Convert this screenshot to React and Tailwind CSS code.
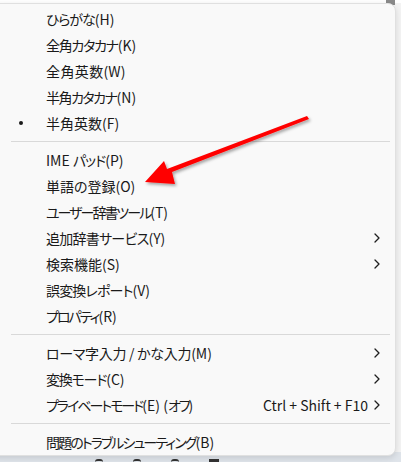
import React from "react";

const Chevron = () => (
  <svg width="8" height="10" viewBox="0 0 8 10" className="shrink-0">
    <path d="M2 1 L6 5 L2 9" fill="none" stroke="#1f1f1f" strokeWidth="1.3" strokeLinecap="round" strokeLinejoin="round" />
  </svg>
);

const Row = ({ children, bullet, sub, shortcut }) => (
  <div className="h-[26px] flex items-center relative">
    {bullet && <span className="absolute left-[18px] top-[11px] w-[4px] h-[4px] rounded-full bg-[#1a1a1a]" />}
    <span className="pl-[45px] flex-1 whitespace-nowrap">{children}</span>
    {shortcut && <span className="mr-[5px] whitespace-nowrap">{shortcut}</span>}
    <span className="w-[22px] flex items-center">{sub && <Chevron />}</span>
  </div>
);

const Sep = () => (
  <div className="py-[5px] pl-[10px] pr-[5px]">
    <div className="h-px bg-[#d9d9d9]" />
  </div>
);

export default function App() {
  return (
    <div className="w-[401px] h-[462px] bg-[#f3f3f3] relative overflow-hidden text-[14px] text-[#1a1a1a] font-['Noto_Sans_CJK_JP','Noto_Sans',sans-serif] [font-feature-settings:'palt']">
      <div className="h-[3px] bg-white flex justify-end">
        <div className="w-[9px] h-[5px] bg-[#8a8a8a] mr-[6px]" />
      </div>
      <div className="flex flex-col">
        <div className="-ml-[10px] w-[406px] h-[453px] bg-[#f9f9f9] rounded-[8px] border border-[#e0e0e0] shadow-[0_2px_6px_rgba(0,0,0,0.12)] pt-[2px] pl-[10px] relative z-10">
          <Row><span className="tracking-[-1px]">ひらがな</span>(H)</Row>
          <Row><span className="tracking-[-1.3px]">全角カタカナ</span>(K)</Row>
          <Row><span className="tracking-[0.4px]">全角英数</span>(W)</Row>
          <Row><span className="tracking-[-1.5px]">半角カタカナ</span>(N)</Row>
          <Row bullet>半角英数(F)</Row>
          <Sep />
          <Row>IME <span className="tracking-[-1px]">パッド</span>(P)</Row>
          <Row>単語の登録(O)</Row>
          <Row><span className="tracking-[-2px]">ユーザー辞書ツール</span>(T)</Row>
          <Row sub><span className="tracking-[-0.75px]">追加辞書サービス</span>(Y)</Row>
          <Row sub>検索機能(S)</Row>
          <Row><span className="tracking-[-0.85px]">誤変換レポート</span>(V)</Row>
          <Row><span className="tracking-[-2px]">プロパティ</span>(R)</Row>
          <Sep />
          <Row sub><span className="tracking-[-0.3px]">ローマ字入力 / かな入力</span>(M)</Row>
          <Row sub><span className="tracking-[-1.2px]">変換モード</span>(C)</Row>
          <Row sub shortcut="Ctrl + Shift + F10">
            <span className="tracking-[-2px]">プライベートモード</span>(E) (<span className="tracking-[-2px]">オフ</span>)
          </Row>
          <Sep />
          <Row><span className="tracking-[-1.9px]">問題のトラブルシューティング</span>(B)</Row>
        </div>
        <div className="h-[10px] -mt-[4px] bg-[#dfe4ea] flex items-end gap-[30px] pl-[95px]">
          <div className="w-[8px] h-[3px] border-t-2 border-[#333] rounded-t" />
          <div className="w-[8px] h-[3px] border-t-2 border-[#333] rounded-t" />
          <div className="w-[8px] h-[3px] border-t-2 border-[#333] rounded-t" />
          <div className="w-[10px] h-[3px] bg-[#333]" />
        </div>
      </div>
      <svg className="absolute left-0 top-0 pointer-events-none z-20" width="401" height="462">
        <defs>
          <filter id="sh" x="-20%" y="-20%" width="140%" height="140%">
            <feDropShadow dx="1.5" dy="2" stdDeviation="1.5" floodColor="#000" floodOpacity="0.35" />
          </filter>
        </defs>
        <polygon
          points="307,116 309,119 172,172 175,184 145,182 164,161 167,169"
          fill="#ff0000"
          filter="url(#sh)"
        />
      </svg>
    </div>
  );
}
